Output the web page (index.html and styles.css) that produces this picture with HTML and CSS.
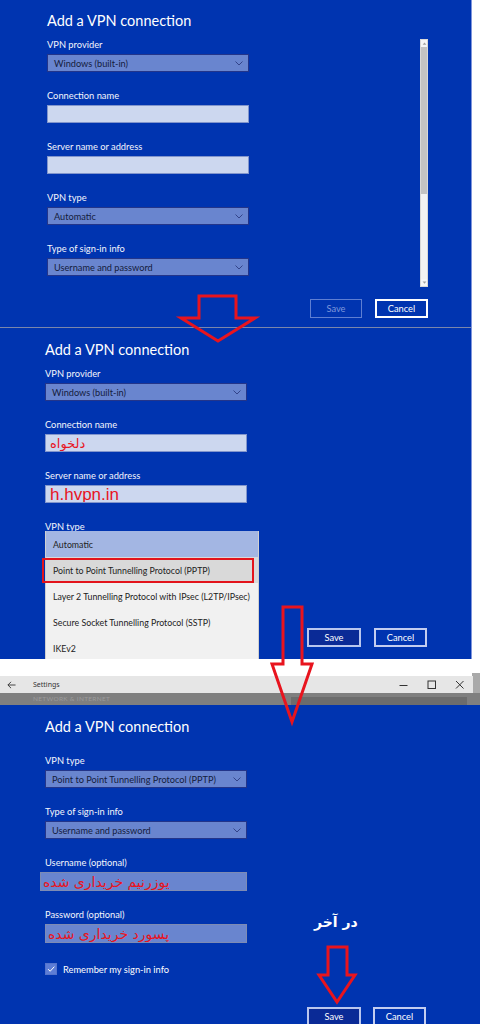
FILE: index.html
```html
<!DOCTYPE html>
<html lang="en">
<head>
<meta charset="utf-8">
<title>Add a VPN connection</title>
<link rel="stylesheet" href="styles.css">
</head>
<body>
<div class="page">

  <section class="shot">
    <div class="dlg dlg1">
      <h1 class="title">Add a VPN connection</h1>
      <div class="body-row">
        <div class="form">
          <div class="field">
            <div class="label">VPN provider</div>
            <div class="select"><span>Windows (built-in)</span><svg class="chev" viewBox="0 0 8 5"><polyline points="0.5,0.5 4,4 7.5,0.5"/></svg></div>
          </div>
          <div class="field">
            <div class="label">Connection name</div>
            <div class="input"></div>
          </div>
          <div class="field">
            <div class="label">Server name or address</div>
            <div class="input"></div>
          </div>
          <div class="field">
            <div class="label">VPN type</div>
            <div class="select"><span>Automatic</span><svg class="chev" viewBox="0 0 8 5"><polyline points="0.5,0.5 4,4 7.5,0.5"/></svg></div>
          </div>
          <div class="field">
            <div class="label">Type of sign-in info</div>
            <div class="select"><span>Username and password</span><svg class="chev" viewBox="0 0 8 5"><polyline points="0.5,0.5 4,4 7.5,0.5"/></svg></div>
          </div>
        </div>
        <div class="scrollbar">
          <div class="sb-arrow"><svg viewBox="0 0 6 4"><polygon points="3,0.5 5.5,3.5 0.5,3.5"/></svg></div>
          <div class="sb-thumb"></div>
          <div class="sb-track"></div>
          <div class="sb-arrow sb-down"><svg viewBox="0 0 6 4"><polygon points="0.5,0.5 5.5,0.5 3,3.5"/></svg></div>
        </div>
      </div>
      <div class="actions">
        <div class="btn btn-disabled">Save</div>
        <div class="btn">Cancel</div>
      </div>
    </div>
    <div class="edge"></div>
  </section>

  <section class="shot">
    <div class="dlg dlg2">
      <h1 class="title">Add a VPN connection</h1>
      <div class="form">
        <div class="field">
          <div class="label">VPN provider</div>
          <div class="select"><span>Windows (built-in)</span><svg class="chev" viewBox="0 0 8 5"><polyline points="0.5,0.5 4,4 7.5,0.5"/></svg></div>
        </div>
        <div class="field">
          <div class="label">Connection name</div>
          <div class="input"><span class="fa" dir="rtl">دلخواه</span></div>
        </div>
        <div class="field">
          <div class="label">Server name or address</div>
          <div class="input"><span class="en-red">h.hvpn.in</span></div>
        </div>
        <div class="field">
          <div class="label">VPN type</div>
          <div class="select-wrap">
            <div class="select"><span>Automatic</span></div>
            <ul class="dropdown">
              <li class="opt opt-sel">Automatic</li>
              <li class="opt opt-hover">Point to Point Tunnelling Protocol (PPTP)</li>
              <li class="opt">Layer 2 Tunnelling Protocol with IPsec (L2TP/IPsec)</li>
              <li class="opt">Secure Socket Tunnelling Protocol (SSTP)</li>
              <li class="opt">IKEv2</li>
            </ul>
          </div>
        </div>
      </div>
      <div class="actions actions2">
        <div class="btn btn-primary">Save</div>
        <div class="btn btn-soft">Cancel</div>
      </div>
    </div>
    <div class="edge"></div>
  </section>

  <div class="white-gap"><div class="white-fill"></div><div class="gap-edge"></div></div>

  <section class="shot3">
    <div class="titlebar-row">
      <div class="titlebar">
        <svg class="tb-back" viewBox="0 0 10 8"><path d="M9.5 4H1M4.5 0.5L1 4l3.5 3.5"/></svg>
        <span class="tb-title">Settings</span>
        <span class="tb-controls">
          <svg viewBox="0 0 10 10"><path d="M0.5 5.5h8"/></svg>
          <svg viewBox="0 0 10 10"><rect x="1" y="1" width="7.5" height="7.5"/></svg>
          <svg viewBox="0 0 10 10"><path d="M1 1l7.5 7.5M8.5 1L1 8.5"/></svg>
        </span>
      </div>
      <div class="tb-edge"></div>
    </div>
    <div class="navbar">
      <span class="nav-text">NETWORK &amp; INTERNET</span>
      <span class="nav-search"></span>
    </div>
    <div class="dlg dlg3">
      <h1 class="title">Add a VPN connection</h1>
      <div class="form form3">
        <div class="field">
          <div class="label">VPN type</div>
          <div class="select"><span>Point to Point Tunnelling Protocol (PPTP)</span><svg class="chev" viewBox="0 0 8 5"><polyline points="0.5,0.5 4,4 7.5,0.5"/></svg></div>
        </div>
        <div class="field">
          <div class="label">Type of sign-in info</div>
          <div class="select"><span>Username and password</span><svg class="chev" viewBox="0 0 8 5"><polyline points="0.5,0.5 4,4 7.5,0.5"/></svg></div>
        </div>
        <div class="field">
          <div class="label">Username (optional)</div>
          <div class="input input-dark input-wide"><span class="fa fa-big" dir="rtl">یوزرنیم خریداری شده</span></div>
        </div>
        <div class="field">
          <div class="label">Password (optional)</div>
          <div class="input input-dark"><span class="fa fa-big" dir="rtl">پسورد خریداری شده</span></div>
        </div>
        <div class="check-row">
          <span class="checkbox"><svg viewBox="0 0 12 12"><polyline points="2.5,6.2 5,8.7 10,3.2"/></svg></span>
          <span class="check-label">Remember my sign-in info</span>
        </div>
      </div>
      <div class="actions actions3">
        <div class="btn btn-primary">Save</div>
        <div class="btn btn-soft">Cancel</div>
      </div>
    </div>
  </section>

  <div class="note" dir="rtl">در آخر</div>

  <svg class="arrows" viewBox="0 0 480 1024" width="480" height="1024">
    <polygon points="199,296 236,296 236,318 255,318 218,341 181,318 199,318"/>
    <polygon points="283,607 302,607 302,664 312,664 292,722 272,664 283,664"/>
    <polygon points="328,947 347,947 347,975 355,975 337,1002 319,975 328,975"/>
  </svg>
</div>
</body>
</html>
```

FILE: styles.css
```css
* { box-sizing: border-box; }

body {
  margin: 0;
  background: #ffffff;
  font-family: Lato, "Noto Sans", sans-serif;
}

.page {
  position: relative;
  width: 480px;
  height: 1024px;
  overflow: hidden;
  background: #ffffff;
}

.shot {
  display: flex;
}

.dlg {
  background: #0034b0;
  color: #ffffff;
  overflow: hidden;
}

.edge {
  flex: 1;
  background: #ffffff;
  border-left: 1px solid #7f95dc;
}

.dlg1 {
  width: 471px;
  height: 327px;
  padding: 10px 43px 0 47px;
}

.dlg2 {
  width: 471px;
  height: 332px;
  padding: 11px 44px 0 45px;
  border-top: 1px solid #7a86ab;
}

.title {
  margin: 0 0 6px;
  font-weight: 400;
  font-size: 14.5px;
  line-height: 22px;
  color: #ffffff;
}

.body-row {
  display: flex;
  align-items: flex-start;
}

.form {
  width: 202px;
}

.field + .field {
  margin-top: 17px;
}

.label {
  font-size: 9.3px;
  line-height: 14px;
  margin-bottom: 2px;
  color: #f4f6fc;
}

.select {
  height: 18px;
  display: flex;
  align-items: center;
  justify-content: space-between;
  padding: 0 5px 0 6px;
  background: #6985cf;
  border: 1px solid #23358a;
  font-size: 9.2px;
  color: #141c3c;
  white-space: nowrap;
}

.chev {
  width: 8px;
  height: 5px;
  flex: none;
  fill: none;
  stroke: #33448a;
  stroke-width: 1;
}

.input {
  height: 18px;
  display: flex;
  align-items: center;
  padding: 0 4px;
  background: #ccd7ef;
  border: 1px solid #8195cc;
  overflow: hidden;
}

.fa {
  font-family: "DejaVu Sans", sans-serif;
  font-size: 13px;
  color: #e8141e;
  line-height: 1;
}

.en-red {
  font-family: "Liberation Sans", Arial, sans-serif;
  font-size: 17px;
  color: #e8141e;
  line-height: 1;
}

.scrollbar {
  margin-left: auto;
  margin-top: 1px;
  width: 8px;
  height: 248px;
  display: flex;
  flex-direction: column;
  border: 1px solid #d8d8d8;
  background: #f0f0f0;
}

.sb-arrow {
  height: 7px;
  display: flex;
  align-items: center;
  justify-content: center;
  background: #f6f6f6;
}

.sb-arrow svg {
  width: 5px;
  height: 3px;
  fill: #a0a0a0;
}

.sb-thumb {
  height: 147px;
  background: #c3c3c3;
}

.sb-track {
  flex: 1;
  background: #f2f2f2;
}

.actions {
  display: flex;
  justify-content: flex-end;
  gap: 13px;
  margin-top: 12px;
}

.btn {
  width: 53px;
  height: 19px;
  display: flex;
  align-items: center;
  justify-content: center;
  border: 2px solid #ffffff;
  font-size: 9.3px;
  color: #ffffff;
}

.btn-disabled {
  width: 52px;
  border: 1px solid #5e7ed2;
  color: #7d97db;
}

.btn-primary {
  width: 54px;
  background: #0a2a96;
  border: 2px solid #b9c6ee;
}

.btn-soft {
  border: 2px solid #c3cdf0;
}

.actions2 {
  margin-top: 74px;
}

.select-wrap {
  position: relative;
}

.dropdown {
  position: absolute;
  top: -5px;
  left: 0;
  width: 214px;
  margin: 0;
  padding: 0;
  list-style: none;
  background: #f1f1f1;
  border: 1px solid #d0d0d0;
  border-top: none;
  z-index: 2;
}

.opt {
  position: relative;
  height: 26px;
  display: flex;
  align-items: center;
  padding-left: 7px;
  font-size: 8.8px;
  color: #222222;
  white-space: nowrap;
}

.opt-sel {
  background: #a3b6e3;
}

.opt-hover {
  background: #d9d9d9;
}

.opt-hover::after {
  content: "";
  position: absolute;
  left: -4px;
  right: 4px;
  top: 1px;
  bottom: 0;
  border: 2px solid #e3141c;
}

.white-gap {
  display: flex;
  height: 17px;
}

.white-fill {
  width: 472px;
  background: #ffffff;
}

.gap-edge {
  flex: 1;
  background: linear-gradient(#ffffff 0 14px, #a9a9a9 14px);
}

.titlebar-row {
  display: flex;
  height: 17px;
}

.titlebar {
  width: 473px;
  display: flex;
  align-items: center;
  background: #e6e6e6;
  padding-left: 7px;
}

.tb-edge {
  flex: 1;
  background: #a9a9a9;
}

.tb-back {
  width: 9px;
  height: 8px;
  fill: none;
  stroke: #333333;
  stroke-width: 1;
}

.tb-title {
  margin-left: 17px;
  font-family: "Noto Sans", sans-serif;
  font-size: 7px;
  color: #333333;
}

.tb-controls {
  margin-left: auto;
  display: flex;
  gap: 18px;
  padding-right: 8px;
}

.tb-controls svg {
  width: 10px;
  height: 10px;
  fill: none;
  stroke: #333333;
  stroke-width: 1;
}

.navbar {
  height: 12px;
  display: flex;
  align-items: center;
  background: #7f7f7f;
  overflow: hidden;
  padding-left: 33px;
}

.nav-text {
  font-size: 6.5px;
  line-height: 10px;
  color: #9c9c9c;
  letter-spacing: 0.3px;
}

.nav-search {
  margin-left: auto;
  margin-right: 13px;
  align-self: flex-end;
  width: 176px;
  height: 8px;
  background: #6c6c6c;
}

.dlg3 {
  width: 480px;
  height: 319px;
  padding: 11px 54px 0 45px;
}

.dlg3 .title {
  margin-bottom: 16px;
}

.form3 .input {
  height: 19px;
}

.input-dark {
  background: #6985cf;
  border: 1px solid #7d8bb4;
  padding-left: 2px;
}

.input-wide {
  margin-left: -5px;
  width: 207px;
}

.fa-big {
  font-size: 14px;
}

.check-row {
  display: flex;
  align-items: center;
  gap: 6px;
  margin-top: 20px;
}

.checkbox {
  width: 12px;
  height: 12px;
  display: flex;
  background: #5d7dd6;
  border: 1px solid #5574cc;
}

.checkbox svg {
  width: 10px;
  height: 10px;
  fill: none;
  stroke: #ffffff;
  stroke-width: 1.2;
}

.check-label {
  font-size: 9.3px;
  color: #ffffff;
}

.actions3 {
  margin-top: 32px;
  gap: 12px;
}

.note {
  position: absolute;
  left: 314px;
  top: 914px;
  font-family: "DejaVu Sans", sans-serif;
  font-weight: 700;
  font-size: 14px;
  color: #ffffff;
}

.arrows {
  position: absolute;
  left: 0;
  top: 0;
  pointer-events: none;
  fill: none;
  stroke: #e8141e;
  stroke-width: 3;
}
```
